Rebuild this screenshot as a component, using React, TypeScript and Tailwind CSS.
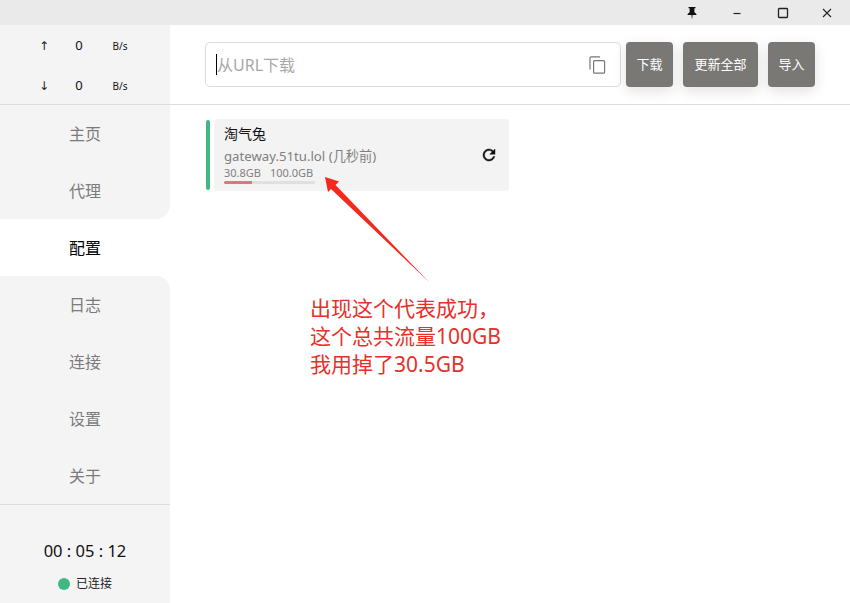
import React from "react";

const font = { fontFamily: '"Noto Sans","Noto Sans CJK SC",sans-serif' };

function NavItem({ label, className = "" }: { label: string; className?: string }) {
  return (
    <div className={`h-[57px] flex items-center justify-center text-[16px] text-[#7b7b7b] pt-[1px] ${className}`}>
      <span>{label}</span>
    </div>
  );
}

function Traffic({ arrow }: { arrow: string }) {
  return (
    <div className="flex items-center h-[20px] text-[#111]">
      <span className="w-[38px] ml-[25px] text-center text-[12px] text-[#222]" style={{ fontFamily: '"DejaVu Sans",sans-serif' }}>{arrow}</span>
      <span className="w-[32px] text-center text-[13px]">0</span>
      <span className="ml-[8px] text-[10px] w-[34px] text-center">B/s</span>
    </div>
  );
}

function TopButton({ label, className }: { label: string; className: string }) {
  return (
    <div className={`h-[45px] rounded-[4px] bg-[#7a7875] text-white text-[13px] flex items-center justify-center shadow-[0_4px_14px_rgba(0,0,0,0.12)] ${className}`}>{label}</div>
  );
}

export default function App() {
  return (
    <div className="relative w-[850px] h-[603px] overflow-hidden bg-white flex flex-col" style={font}>
      <div className="h-[25px] bg-[#eaeaea] flex items-center justify-end shrink-0">
        <svg className="mr-[34px]" width="12" height="14" viewBox="0 0 12 14">
          <path d="M2.5 1h7v1.2H8.4v4l2 1.8v1H6.6L6 13.5 5.4 9H1.6V8l2-1.8v-4H2.5z" fill="#111" />
        </svg>
        <svg className="mr-[35px]" width="10" height="10" viewBox="0 0 10 10">
          <path d="M1.5 5.5h7" stroke="#222" strokeWidth="1.2" />
        </svg>
        <svg className="mr-[33px]" width="12" height="12" viewBox="0 0 12 12">
          <rect x="1.5" y="1.5" width="9" height="9" rx="0.8" fill="none" stroke="#222" strokeWidth="1.3" />
        </svg>
        <svg className="mr-[18px]" width="10" height="10" viewBox="0 0 10 10">
          <path d="M1 1l8 8M9 1l-8 8" stroke="#222" strokeWidth="1.1" />
        </svg>
      </div>
      <div className="flex flex-1 min-h-0">
        <aside className="w-[170px] shrink-0 flex flex-col bg-white">
          <div className="h-[80px] shrink-0 bg-[#f4f4f4] border-b border-[#dddddd] flex flex-col items-stretch pt-[11px] gap-[20px]">
            <Traffic arrow="↑" />
            <Traffic arrow="↓" />
          </div>
          <div className="bg-[#f4f4f4]"><NavItem label="主页" /></div>
          <div className="bg-[#f4f4f4] rounded-br-[14px]"><NavItem label="代理" /></div>
          <NavItem label="配置" className="!text-black bg-white" />
          <div className="bg-[#f4f4f4] rounded-tr-[14px]"><NavItem label="日志" /></div>
          <div className="bg-[#f4f4f4]"><NavItem label="连接" /></div>
          <div className="bg-[#f4f4f4]"><NavItem label="设置" /></div>
          <div className="bg-[#f4f4f4] border-b border-[#dddddd]"><NavItem label="关于" /></div>
          <div className="flex-1 bg-[#f4f4f4] flex flex-col items-center pt-[36px]">
            <div className="text-[16.5px] text-[#111] leading-[20px]">00 : 05 : 12</div>
            <div className="flex items-center mt-[15px] text-[12px] text-[#222] leading-[16px]">
              <span className="w-[12px] h-[12px] rounded-full bg-[#41b883] mr-[6px]" />
              已连接
            </div>
          </div>
        </aside>
        <main className="flex-1 min-w-0 flex flex-col">
          <div className="h-[80px] shrink-0 border-b border-[#dddddd] flex items-start pt-[17px] pl-[35px]">
            <div className="w-[416px] h-[45px] rounded-[5px] border border-[#dcdcdc] bg-white flex items-center pl-[10px] pr-[14px]">
              <span className="w-px h-[21px] bg-black" />
              <span className="flex-1 text-[16px] text-[#a8a8a8] mt-[1px]">从URL下载</span>
              <svg width="17" height="18" viewBox="0 0 17 18" fill="none" stroke="#777" strokeWidth="1.2">
                <path d="M1 13.5V2a1.2 1.2 0 0 1 1.2-1.2H11" />
                <rect x="4.6" y="4.6" width="11" height="12.6" rx="1" />
              </svg>
            </div>
            <TopButton label="下载" className="w-[47px] ml-[5px]" />
            <TopButton label="更新全部" className="w-[75px] ml-[10px]" />
            <TopButton label="导入" className="w-[47px] ml-[10px]" />
          </div>
          <div className="pl-[36px] pt-[14px] flex">
            <div className="w-[4px] h-[70px] mt-[1px] rounded-[2px] bg-[#41b883]" />
            <div className="ml-[4px] w-[295px] h-[72px] rounded-[4px] bg-[#f3f3f3] pl-[10px] pr-[11px] flex items-center justify-between">
              <div className="w-[91px] whitespace-nowrap">
                <div className="text-[14px] text-[#111] leading-[18px] mt-[-1px]">淘气兔</div>
                <div className="text-[13.2px] text-[#808080] leading-[16px] mt-[5px]">gateway.51tu.lol (几秒前)</div>
                <div className="text-[11px] text-[#808080] leading-[13px] mt-[2px] flex gap-[9px]">
                  <span>30.8GB</span>
                  <span>100.0GB</span>
                </div>
                <div className="h-[3px] mt-[2px] rounded-full bg-[#e0e0e0] overflow-hidden">
                  <div className="h-full bg-[#e8707f]" style={{ width: "31%" }} />
                </div>
              </div>
              <svg width="18" height="18" viewBox="0 0 24 24" fill="#111" stroke="#111" strokeWidth="0.6">
                <path d="M17.65 6.35A7.95 7.95 0 0 0 12 4c-4.42 0-7.99 3.58-7.99 8s3.57 8 7.99 8c3.73 0 6.84-2.55 7.73-6h-2.08A5.99 5.99 0 0 1 12 18c-3.31 0-6-2.69-6-6s2.69-6 6-6c1.66 0 3.14.69 4.22 1.78L13 11h7V4l-2.35 2.35z" />
              </svg>
            </div>
          </div>
        </main>
      </div>
      <svg className="absolute left-[320px] top-[175px]" width="115" height="110" viewBox="0 0 115 110">
        <path d="M5 2 L19 6.5 L15.5 10 L109 107 L11 14 L8 17 Z" fill="#f5281e" />
      </svg>
      <div className="absolute left-[310px] top-[294px] text-[21px] leading-[28px] text-[#e8302a] whitespace-nowrap">
        <div>出现这个代表成功，</div>
        <div>这个总共流量100GB</div>
        <div>我用掉了30.5GB</div>
      </div>
    </div>
  );
}
